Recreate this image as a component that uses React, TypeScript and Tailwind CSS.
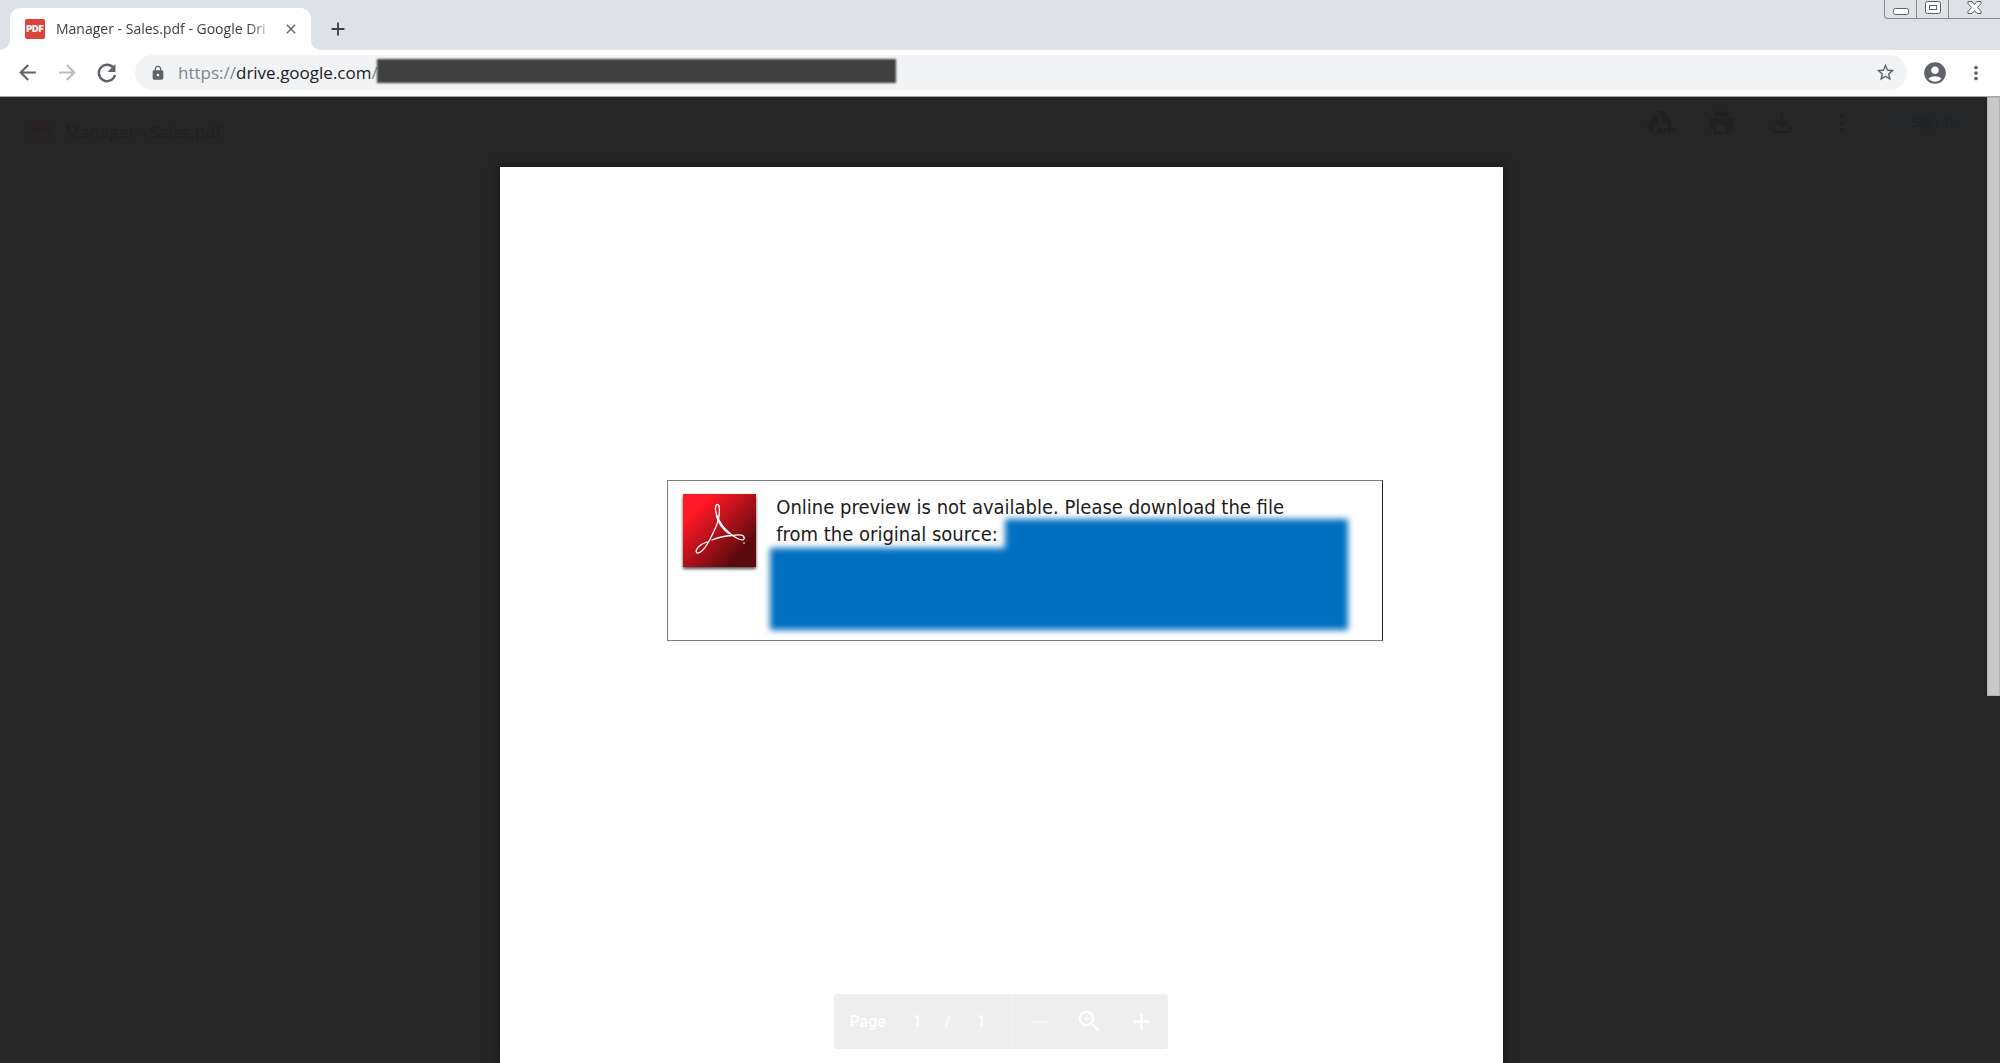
import React from "react";
import {
  MdAccountCircle,
  MdAdd,
  MdArrowBack,
  MdArrowForward,
  MdClose,
  MdLock,
  MdMoreVert,
  MdOutlineFileDownload,
  MdPrint,
  MdRemove,
  MdStarBorder,
  MdZoomIn,
} from "react-icons/md";

function WindowButtons() {
  return (
    <div className="flex h-[19px] w-[116px] rounded-bl-[4px] border-b border-l border-[#85878a]">
      <button aria-label="Minimize" className="flex w-8 items-center justify-center border-r border-[#85878a]">
        <svg width="16" height="14" viewBox="0 0 16 14" fill="#fff" stroke="#5f6164">
          <rect x="0.5" y="6.5" width="15" height="6" rx="2" />
        </svg>
      </button>
      <button aria-label="Restore" className="flex w-8 items-center justify-center border-r border-[#85878a] pb-1">
        <svg width="16" height="13" viewBox="0 0 16 13" fill="#fff" stroke="#5f6164">
          <rect x="0.5" y="0.5" width="15" height="12" rx="2" />
          <rect x="4.5" y="4.5" width="7" height="4" />
        </svg>
      </button>
      <button aria-label="Close window" className="flex flex-1 items-center justify-center pb-1">
        <svg width="15" height="13" viewBox="0 0 15 13" fill="#fff" stroke="#5f6164">
          <path d="M1 .5h4l2.500 3 2.500-3h4v2l-3.500 4 3.500 4v2h-4l-2.500-3-2.500 3h-4v-2l3.500-4-3.500-4z" />
        </svg>
      </button>
    </div>
  );
}

function TabStrip() {
  return (
    <header className="flex h-[50px] justify-between bg-[#dee1e6] pl-[10px]">
      <div className="flex items-end">
        <div className="relative flex h-[42px] w-[301px] items-center rounded-t-[10px] bg-white pr-3 pb-[1px] pl-[15px]">
          <svg className="absolute bottom-0 -left-[10px]" width="10" height="10" fill="#fff">
            <path d="M10 0v10H0A10 10 0 0 0 10 0z" />
          </svg>
          <svg className="absolute -right-[10px] bottom-0" width="10" height="10" fill="#fff">
            <path d="M0 0v10h10A10 10 0 0 1 0 0z" />
          </svg>
          <span className="flex size-5 shrink-0 items-center justify-center rounded-[2px] bg-[#db4437] font-['Inter'] text-[9px] font-black text-white">
            PDF
          </span>
          <span className="ml-[11px] w-[219px] mask-r-from-88% mask-r-to-100% font-['Open_Sans',sans-serif] text-[14px] whitespace-nowrap text-[#3c4043]">
            Manager - Sales.pdf - Google Dri
          </span>
          <button aria-label="Close tab" className="ml-2 text-[#5f6368]">
            <MdClose size={16} />
          </button>
        </div>
        <button aria-label="New tab" className="mb-[10px] ml-4 text-[#3c4043]">
          <MdAdd size={22} />
        </button>
      </div>
      <WindowButtons />
    </header>
  );
}

function ReloadIcon() {
  return (
    <svg width="24" height="24" viewBox="0 0 24 24">
      <path d="M19 7.500A8.200 8.200 0 1 0 20 14" fill="none" stroke="currentColor" strokeWidth="2.500" />
      <path d="M20.500 3v8h-8z" fill="currentColor" />
    </svg>
  );
}

function Toolbar() {
  return (
    <div className="flex h-[47px] items-center border-b border-[#a5a7a9] bg-white pb-[1px] pl-[15px] text-[#5f6368]">
      <nav className="flex items-center gap-[15px]">
        <button aria-label="Back">
          <MdArrowBack size={25} />
        </button>
        <button aria-label="Forward" className="text-[#babcbe]">
          <MdArrowForward size={25} />
        </button>
        <button aria-label="Reload">
          <ReloadIcon />
        </button>
      </nav>
      <div className="ml-4 flex h-[35px] flex-1 items-center rounded-full bg-[#f1f3f4] pr-[11px] pl-[15px]">
        <MdLock size={16} />
        <div className="relative ml-3 flex-1 font-['Open_Sans',sans-serif] text-[17px] leading-6">
          <span className="text-[#80868b]">https://</span>
          <span className="text-[#202124]">drive.google.com</span>
          <span className="text-[#80868b]">/</span>
          <span className="absolute -top-0.5 left-[199px] h-6 w-[519px] bg-[#404040] blur-[1px]" />
        </div>
        <button aria-label="Bookmark this page">
          <MdStarBorder size={21} />
        </button>
      </div>
      <button aria-label="Profile" className="ml-[15px]">
        <MdAccountCircle size={26} />
      </button>
      <button aria-label="Menu" className="mr-[13px] ml-[17px]">
        <MdMoreVert size={22} />
      </button>
    </div>
  );
}

function AddToDriveIcon() {
  return (
    <svg width="28" height="26" viewBox="0 0 28 26" fill="currentColor">
      <path d="M8 3l4 7-8 14-4-7zM10 1h8l8 13h-8zM11 18h5v3h2v3H7z" />
      <path d="M21 14h3v4h4v3h-4v4h-3v-4h-4v-3h4z" />
    </svg>
  );
}

function ViewerHeader() {
  return (
    <div className="flex h-[70px] items-start justify-between pt-2 pr-[23px] pl-[30px] text-[#202020]">
      <div className="flex items-center gap-[13px] pt-4">
        <span className="flex size-[22px] items-center justify-center rounded-[2px] bg-[#282423] font-['Inter'] text-[9px] font-bold">
          PDF
        </span>
        <h1 className="font-['Open_Sans',sans-serif] text-[17px] leading-[22px]">Manager - Sales.pdf</h1>
      </div>
      <div className="flex h-[35px] items-center">
        <button aria-label="Add to My Drive" className="mr-[31px]">
          <AddToDriveIcon />
        </button>
        <button aria-label="Print" className="mr-[31px]">
          <MdPrint size={30} />
        </button>
        <button aria-label="Download" className="mr-[31px]">
          <MdOutlineFileDownload size={30} />
        </button>
        <button aria-label="More actions" className="mr-[31px]">
          <MdMoreVert size={28} />
        </button>
        <button className="h-[35px] w-[90px] rounded-[3px] bg-[#242628] font-['Liberation_Sans',sans-serif] text-[14px] text-[#202123]">
          Sign in
        </button>
      </div>
    </div>
  );
}

function AcrobatIcon() {
  return (
    <svg width="73" height="73" viewBox="0 0 73 73" className="shrink-0 shadow-[0_2px_3px_rgba(0,0,0,0.7)]">
      <defs>
        <linearGradient id="acrobat" x1="0" y1="0" x2="1" y2="1">
          <stop offset="0.2" stopColor="#ff1826" />
          <stop offset="0.5" stopColor="#b01119" />
          <stop offset="0.8" stopColor="#5c0a0e" />
        </linearGradient>
      </defs>
      <rect width="73" height="73" fill="url(#acrobat)" />
      <g fill="none" stroke="#fff" strokeLinecap="round">
        <path strokeWidth="1.3" d="M36 12C35 9 32 10 32.500 16C33 24 37 30 45 38C51 43 59 48 61 45C62 41 57 40 49 41.500C42 42 35 43.500 29 46" />
        <path strokeWidth="1.3" d="M36 12C37 18 36 27 31 37C26 48 19 60 14 59C11 56 17 50 24 48" />
        <path strokeWidth="2.400" d="M34 22C36 29 40 35 46 39" />
      </g>
      <circle cx="61" cy="49" r="1" fill="#fff" opacity="0.6" />
    </svg>
  );
}

function PreviewNotice() {
  return (
    <section className="mt-[313px] mr-[120px] ml-[167px] flex h-[161px] gap-5 border border-[#808080] border-r-[#222] bg-white pt-[13px] pl-[15px]">
      <AcrobatIcon />
      <div className="relative flex-1">
        <div className="absolute inset-0 blur-[3px]">
          <div className="absolute top-[25px] right-[34px] left-[229px] h-[60px] bg-[#0070c0]" />
          <div className="absolute top-[54px] right-[34px] -left-[6px] h-[82px] bg-[#0070c0]" />
        </div>
        <p className="relative font-['DejaVu_Sans_Condensed','DejaVu_Sans',sans-serif] text-[20px] leading-[27px] text-[#1c1c1c]">
          Online preview is not available. Please download the file
          <br />
          from the original source:
        </p>
      </div>
    </section>
  );
}

function PageControls() {
  return (
    <div className="absolute bottom-[14px] left-1/2 flex h-[55px] w-[334px] -translate-x-1/2 items-center rounded-[3px] bg-[#eee] pl-[15px] font-['Roboto',sans-serif] text-[16px] font-medium text-white">
      <span className="w-[63px]">Page</span>
      <span className="w-8">1</span>
      <span className="w-8">/</span>
      <span className="w-[35px]">1</span>
      <span className="h-full border-l border-[#f5f5f5]" />
      <button aria-label="Zoom out" className="ml-[15px] opacity-50">
        <MdRemove size={26} />
      </button>
      <button aria-label="Fit to width" className="ml-[22px]">
        <MdZoomIn size={29} />
      </button>
      <button aria-label="Zoom in" className="ml-6">
        <MdAdd size={27} />
      </button>
    </div>
  );
}

export default function App() {
  return (
    <div className="flex h-screen flex-col overflow-hidden">
      <TabStrip />
      <Toolbar />
      <main className="relative flex min-h-0 flex-1 flex-col bg-[#262626]">
        <ViewerHeader />
        <div className="flex flex-1 justify-center pl-[3px]">
          <article className="relative w-[50.200%] bg-white shadow-[0_0_10px_rgba(0,0,0,0.6)]">
            <PreviewNotice />
            <PageControls />
          </article>
        </div>
        <div className="absolute top-0 right-0 h-[62%] w-[13px] border border-[#b2b2b2] bg-[#c8c8c8]" />
      </main>
    </div>
  );
}
